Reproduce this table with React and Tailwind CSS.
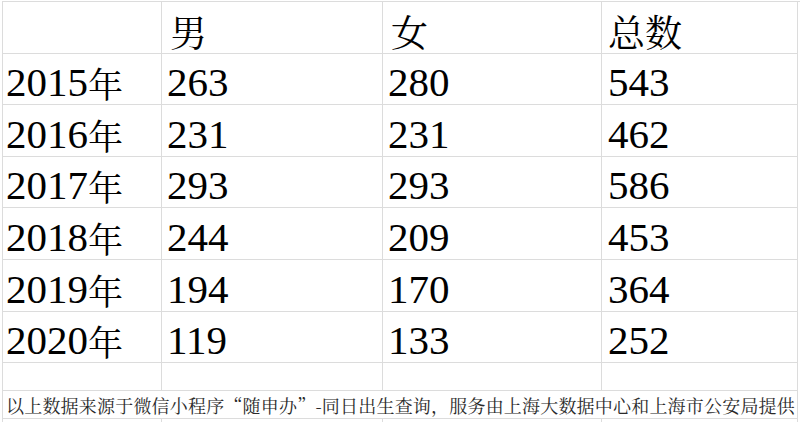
import React from 'react';

const rows = [
    { year: '2015', male: '263', female: '280', total: '543', h: 'h-[51px]' },
    { year: '2016', male: '231', female: '231', total: '462', h: 'h-[52px]' },
    { year: '2017', male: '293', female: '293', total: '586', h: 'h-[51px]' },
    { year: '2018', male: '244', female: '209', total: '453', h: 'h-[52px]' },
    { year: '2019', male: '194', female: '170', total: '364', h: 'h-[52px]' },
    { year: '2020', male: '119', female: '133', total: '252', h: 'h-[51px]' },
];

const serif = { fontFamily: '"Liberation Serif", "Noto Serif CJK SC", serif' };
const cjk = { fontFamily: '"Noto Serif CJK SC", "Noto Sans CJK SC", serif' };

const Cell = ({ children }) => (
    <div className="flex items-end pl-[4px] border-b border-r border-[#dcdcdc]">
        {children}
    </div>
);

const Num = ({ children, className }) => (
    <span className={`text-[41px] leading-none pb-[1px] ${className}`} style={serif}>{children}</span>
);

export default function App() {
    return (
        <div className="w-[800px] h-[422px] overflow-hidden bg-white text-black">
            <div className="ml-[2px] mt-[1px] border-l border-t border-[#dcdcdc]">
                {/* Header */}
                <div className="grid grid-cols-[159px_221px_219px_196px] h-[52px]">
                    <Cell />
                    <Cell><span className="text-[37px] leading-none pb-[3px] pl-[4px]" style={cjk}>男</span></Cell>
                    <Cell><span className="text-[37px] leading-none pb-[3px] pl-[4px]" style={cjk}>女</span></Cell>
                    <Cell><span className="text-[37px] leading-none pb-[3px] pl-[2px]" style={cjk}>总数</span></Cell>
                </div>

                {/* Data */}
                {rows.map((r) => (
                    <div key={r.year} className={`grid grid-cols-[159px_221px_219px_196px] ${r.h}`}>
                        <Cell>
                            <Num className="-ml-[1px]">{r.year}</Num>
                            <span className="text-[35px] leading-none pb-[3px]" style={cjk}>年</span>
                        </Cell>
                        <Cell><Num className="pl-[1px]">{r.male}</Num></Cell>
                        <Cell><Num className="pl-[1px]">{r.female}</Num></Cell>
                        <Cell><Num className="pl-[2px]">{r.total}</Num></Cell>
                    </div>
                ))}

                {/* Empty row */}
                <div className="grid grid-cols-[159px_221px_219px_196px] h-[28px]">
                    <Cell /><Cell /><Cell /><Cell />
                </div>

                {/* Source note */}
                <div className="h-[28px] w-[795px] border-b border-r border-[#dcdcdc] flex items-center pl-[3px] whitespace-nowrap">
                    <span className="text-[18px] leading-none tracking-[0.2px] text-[#2a2a2a]" style={cjk}>
                        以上数据来源于微信小程序“随申办”-同日出生查询，服务由上海大数据中心和上海市公安局提供
                    </span>
                </div>

                <div className="grid grid-cols-[159px_221px_219px_196px] h-[28px]">
                    <Cell /><Cell /><Cell /><Cell />
                </div>
            </div>
        </div>
    );
}
